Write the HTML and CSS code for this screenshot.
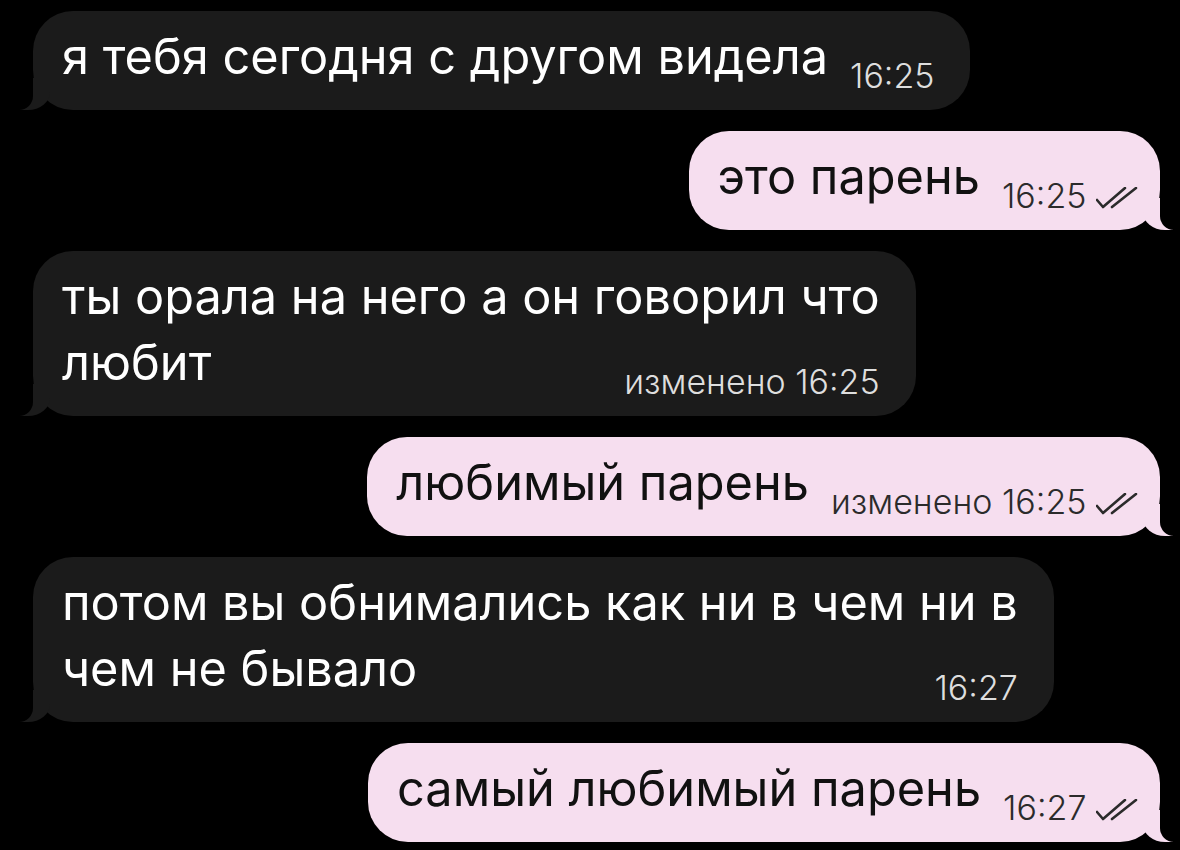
FILE: index.html
```html
<!DOCTYPE html>
<html lang="ru">
<head>
  <meta charset="UTF-8" />
  <title>Чат</title>
  <link rel="stylesheet" href="styles.css">
</head>
<body>
  <div class="chat">
    <div class="msg in">
      <span class="text">я тебя сегодня с другом видела</span><span class="meta">16:25</span>
    </div>

    <div class="msg out">
      <span class="text">это парень</span><span class="meta">16:25 <svg class="check" viewBox="0 0 42 22"><path d="M1 13 L7 20 L29 1 M16 20 L40 1" /></svg></span>
    </div>

    <div class="msg in">
      <span class="text">ты орала на него а он говорил что<br>любит</span><span class="meta">изменено 16:25</span>
    </div>

    <div class="msg out">
      <span class="text">любимый парень</span><span class="meta">изменено 16:25 <svg class="check" viewBox="0 0 42 22"><path d="M1 13 L7 20 L29 1 M16 20 L40 1" /></svg></span>
    </div>

    <div class="msg in">
      <span class="text">потом вы обнимались как ни в чем ни в<br>чем не бывало</span><span class="meta">16:27</span>
    </div>

    <div class="msg out">
      <span class="text">самый любимый парень</span><span class="meta">16:27 <svg class="check" viewBox="0 0 42 22"><path d="M1 13 L7 20 L29 1 M16 20 L40 1" /></svg></span>
    </div>
  </div>
</body>
</html>
```

FILE: styles.css
```css
body { margin: 0; background: #000; font-family: Inter, "Liberation Sans", Arial, sans-serif; overflow: hidden; }
.chat { display: flex; flex-direction: column; gap: 21px; padding: 11px 20px 0 33px; }

.msg { position: relative; font-size: 48.7px; line-height: 66px; padding: 13px 36px 17px 29px; border-radius: 40px; }
.msg .meta { float: right; margin: 35px 0 0 22px; font-size: 34px; font-weight: 300; line-height: 34px; white-space: nowrap; }

.in { align-self: flex-start; background: #1b1b1b; color: #fff; }
.in .meta { color: #dedede; }
.in::before { content: ""; position: absolute; left: -13px; bottom: 0; width: 30px; height: 32px; background: #1b1b1b; border-bottom-right-radius: 22px 18px; }
.in::after { content: ""; position: absolute; left: -34px; bottom: 0; width: 34px; height: 32px; background: #000; border-bottom-right-radius: 14px; }

.out { align-self: flex-end; background: #f6deef; color: #111; padding-right: 22px; }
.out .meta { color: #2b2b2b; }
.out::before { content: ""; position: absolute; right: -13px; bottom: 0; width: 30px; height: 32px; background: #f6deef; border-bottom-left-radius: 22px 18px; }
.out::after { content: ""; position: absolute; right: -34px; bottom: 0; width: 34px; height: 32px; background: #000; border-bottom-left-radius: 14px; }

.check { width: 42px; height: 22px; margin-left: 0; vertical-align: -1px; fill: none; stroke: #2b2b2b; stroke-width: 2.6; stroke-linecap: round; stroke-linejoin: round; }
```
